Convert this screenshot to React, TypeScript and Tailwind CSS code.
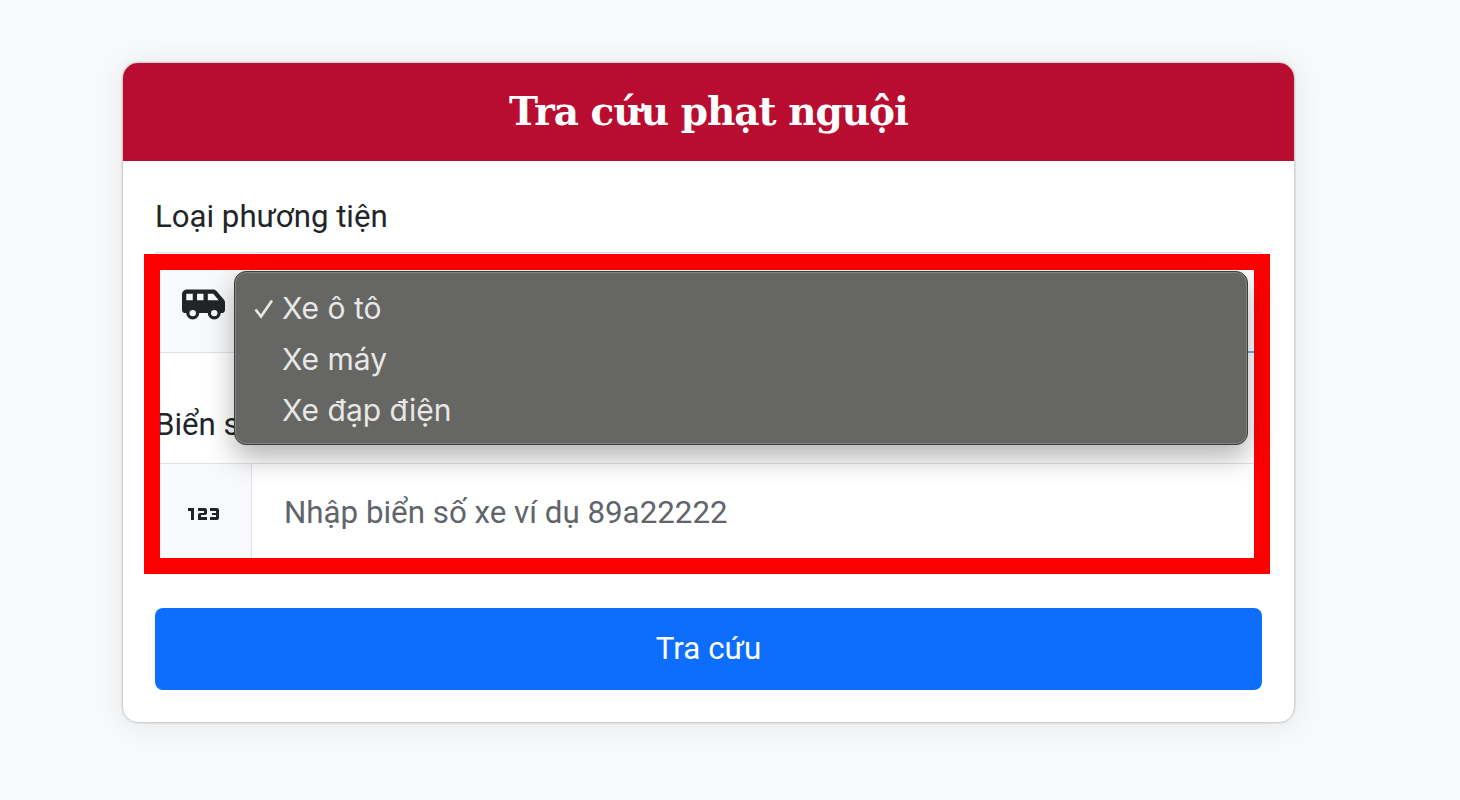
import { FaVanShuttle } from "react-icons/fa6";
import { Md123 } from "react-icons/md";

export default function App() {
  return (
    <div className="min-h-[800px] bg-[#f8f9fa] pl-[123px] pt-[63px] font-['Roboto',sans-serif]">
      <div className="w-[1171px] h-[659px] rounded-2xl border border-[#cfd0d2] bg-white shadow-[0_0_0_1px_rgba(0,0,0,0.05),0_2px_28px_rgba(0,0,0,0.08)] overflow-hidden -mt-px -ml-px box-content">
        <div className="h-[98px] bg-[#b80d30] flex items-center justify-center">
          <h1 className="text-[39px] font-bold text-white font-['DejaVu_Serif',serif] tracking-[-1px] -mt-[2px]">Tra cứu phạt nguội</h1>
        </div>
        <div className="px-[32px] pt-[32px] text-[#212529]">
          <div className="relative">
            <label className="block text-[31.2px] leading-[48px] mb-[11px]">Loại phương tiện</label>
            <div className="flex h-[101px] items-stretch">
              <div className="w-[97px] bg-[#f8f9fa] border border-[#dee2e6] flex items-center justify-center">
                <FaVanShuttle className="w-[43px] h-[43px] text-[#212529] mt-[3px]" />
              </div>
              <div className="flex-1 border-t border-t-[#d6d8f4] border-b-2 border-b-[#86a7ee] border-r border-r-[#dee2e6]" />
            </div>
            <label className="block text-[31.2px] leading-[48px] mt-[48px] mb-[14px]">Biển số</label>
            <div className="flex h-[101px] border-y border-[#dee2e6] items-stretch">
              <div className="w-[97px] bg-[#f8f9fa] border-x border-[#dee2e6] flex items-center justify-center">
                <Md123 className="w-[48px] h-[48px] text-[#212529]" />
              </div>
              <div className="flex-1 flex items-center pl-[32px] text-[31.3px] text-[#5f656b] border-r border-[#dee2e6]">Nhập biển số xe ví dụ 89a22222</div>
            </div>

            <div className="absolute left-[-11px] top-[61px] w-[1126px] h-[320px] border-[16px] border-[#ff0000] pointer-events-none" />

            <div className="absolute left-[79px] top-[78px] w-[1014px] h-[174px] rounded-[12px] bg-[#666664] border border-[#3d3d3c] shadow-[inset_0_0_0_1px_rgba(255,255,255,0.2),0_12px_28px_rgba(0,0,0,0.3)] pt-[11px] text-[30px] leading-[51px] text-[#e8e8e6] font-['Inter','Roboto',sans-serif]">
              {["Xe ô tô", "Xe máy", "Xe đạp điện"].map((t, i) => (
                <div key={t} className="relative pl-[47px]">
                  {i === 0 && (
                    <svg viewBox="0 0 20 20" className="absolute left-[19px] top-[16px] w-[20px] h-[20px]" fill="none" stroke="#e8e8e6" strokeWidth="2.7">
                      <path d="M1.5 10.5 L7 17.5 L18 1.5" />
                    </svg>
                  )}
                  {t}
                </div>
              ))}
            </div>
          </div>
          <button className="mt-[44px] w-full h-[82px] bg-[#0d6efd] text-white rounded-[8px] text-[31.3px] block">Tra cứu</button>
        </div>
      </div>
    </div>
  );
}
